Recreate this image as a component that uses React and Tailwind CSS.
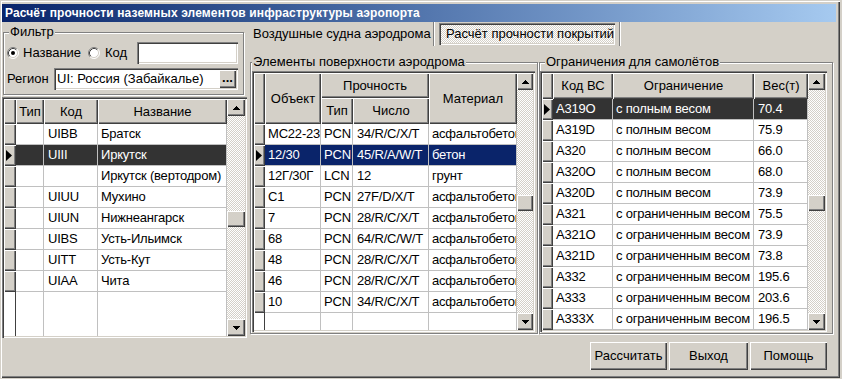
import React from "react";

const raised =
  "bg-[#d4d0c8] shadow-[inset_1px_1px_0_#fff,inset_-1px_-1px_0_#404040,inset_-2px_-2px_0_#808080]";
const button =
  "bg-[#d4d0c8] shadow-[inset_1px_1px_0_#fff,inset_-1px_-1px_0_#404040,inset_-2px_-2px_0_#808080,inset_2px_2px_0_#d4d0c8]";
const sunken =
  "shadow-[inset_1px_1px_0_#808080,inset_2px_2px_0_#404040,inset_-1px_-1px_0_#fff,inset_-2px_-2px_0_#d4d0c8]";
const checker =
  "bg-[repeating-conic-gradient(#fff_0_25%,#d4d0c8_0_50%)] bg-[length:2px_2px]";

const leftRows = [
  { code: "UIBB", name: "Братск" },
  { code: "UIII", name: "Иркутск", sel: true },
  { code: "", name: "Иркутск (вертодром)" },
  { code: "UIUU", name: "Мухино" },
  { code: "UIUN", name: "Нижнеангарск" },
  { code: "UIBS", name: "Усть-Ильимск" },
  { code: "UITT", name: "Усть-Кут" },
  { code: "UIAA", name: "Чита" },
];

const surfaces = [
  ["МС22-23", "PCN", "34/R/C/X/T", "асфальтобетон"],
  ["12/30", "PCN", "45/R/A/W/T", "бетон", true],
  ["12Г/30Г", "LCN", "12", "грунт"],
  ["С1", "PCN", "27F/D/X/T", "асфальтобетон"],
  ["7", "PCN", "28/R/C/X/T", "асфальтобетон"],
  ["68", "PCN", "64/R/C/W/T", "асфальтобетон"],
  ["48", "PCN", "28/R/C/X/T", "асфальтобетон"],
  ["46", "PCN", "28/R/C/X/T", "асфальтобетон"],
  ["10", "PCN", "34/R/C/X/T", "асфальтобетон"],
];

const planes = [
  ["A319O", "с полным весом", "70.4", true],
  ["A319D", "с полным весом", "75.9"],
  ["A320", "с полным весом", "66.0"],
  ["A320O", "с полным весом", "68.0"],
  ["A320D", "с полным весом", "73.9"],
  ["A321", "с ограниченным весом", "75.5"],
  ["A321O", "с ограниченным весом", "73.9"],
  ["A321D", "с ограниченным весом", "73.8"],
  ["A332", "с ограниченным весом", "195.6"],
  ["A333", "с ограниченным весом", "203.6"],
  ["A333X", "с ограниченным весом", "196.5"],
];

function Arrow({ down }) {
  return (
    <svg width="7" height="4" viewBox="0 0 7 4" shapeRendering="crispEdges">
      <path
        d={down ? "M0 0h7v1H6v1H5v1H4v1H3V3H2V2H1V1H0z" : "M3 0h1v1h1v1h1v1h1v1H0V3h1V2h1V1h1z"}
        fill="#000"
      />
    </svg>
  );
}

function Pointer() {
  return (
    <svg width="6" height="11" viewBox="0 0 6 11">
      <polygon points="0,0 6,5.5 0,11" fill="#000" />
    </svg>
  );
}

function Radio({ checked }) {
  return (
    <svg width="12" height="12" viewBox="0 0 12 12" className="shrink-0">
      <circle cx="6" cy="6" r="5" fill="#fff" />
      <path d="M2.11 9.89A5.5 5.5 0 0 1 9.89 2.11" stroke="#808080" fill="none" />
      <path d="M9.89 2.11A5.5 5.5 0 0 1 2.11 9.89" stroke="#fff" fill="none" />
      <path d="M2.82 9.18A4.5 4.5 0 0 1 9.18 2.82" stroke="#404040" fill="none" />
      <path d="M9.18 2.82A4.5 4.5 0 0 1 2.82 9.18" stroke="#d4d0c8" fill="none" />
      {checked && <circle cx="6" cy="6" r="2" fill="#000" />}
    </svg>
  );
}

function Head({ className, children }) {
  return (
    <div className={`${className} shrink-0 flex items-center justify-center whitespace-nowrap ${raised}`}>
      {children}
    </div>
  );
}

function Ind({ className, sel }) {
  return (
    <div className={`${className} shrink-0 h-full flex items-center pl-[2px] ${raised}`}>
      {sel && <Pointer />}
    </div>
  );
}

function Cell({ className, sel, pl = "pl-[3px]", children }) {
  return (
    <div
      className={`${className} ${pl} shrink-0 h-full overflow-hidden whitespace-nowrap leading-[20px] tracking-[-0.2px] border-r border-b border-[#c0c0c0] ${sel || "bg-white"}`}
    >
      {children}
    </div>
  );
}

function Filler({ ind, cols }) {
  return (
    <div className="flex-1 flex bg-white">
      <div className={`${ind} shrink-0 border-r border-[#404040]`} />
      {cols.map((c, i) => (
        <div key={i} className={`${c} shrink-0 border-r border-[#c0c0c0]`} />
      ))}
    </div>
  );
}

function Scroll({ w, gap }) {
  return (
    <div className={`${w} h-full shrink-0 flex flex-col`}>
      <div className={`h-[17px] shrink-0 flex items-center justify-center ${raised}`}>
        <Arrow />
      </div>
      <div className={`flex-1 flex flex-col ${checker}`}>
        <div className={`${gap} shrink-0`} />
        <div className={`h-[16px] shrink-0 ${raised}`} />
      </div>
      <div className={`h-[17px] shrink-0 flex items-center justify-center ${raised}`}>
        <Arrow down />
      </div>
    </div>
  );
}

function Group({ label, labelPos, className, children }) {
  return (
    <div
      className={`relative shrink-0 border border-[#808080] shadow-[inset_1px_1px_0_#fff,1px_1px_0_#fff] ${className}`}
    >
      <span className={`absolute ${labelPos} top-[-9px] bg-[#d4d0c8] px-[1px] leading-[16px] whitespace-nowrap`}>
        {label}
      </span>
      {children}
    </div>
  );
}

function LeftGrid() {
  const dark = "bg-[#333333] text-white";
  return (
    <div className={`mt-[2px] w-[245px] h-[241px] p-[2px] flex bg-white ${sunken}`}>
      <div className="w-[223px] h-full flex flex-col">
        <div className="h-[25px] flex shrink-0">
          <Head className="w-[12px]" />
          <Head className="w-[28px]">Тип</Head>
          <Head className="w-[54px]">Код</Head>
          <Head className="w-[129px]">Название</Head>
        </div>
        {leftRows.map((r) => (
          <div key={r.name} className="h-[21px] flex shrink-0">
            <Ind className="w-[12px]" sel={r.sel} />
            <Cell className="w-[28px]" sel={r.sel && dark} />
            <Cell className="w-[54px]" pl="pl-[4px]" sel={r.sel && dark}>
              {r.code}
            </Cell>
            <Cell className="w-[129px]" sel={r.sel && dark}>
              {r.name}
            </Cell>
          </div>
        ))}
        <Filler ind="w-[12px]" cols={["w-[28px]", "w-[54px]", "w-[129px]"]} />
      </div>
      <Scroll w="w-[18px]" gap="h-[95px]" />
    </div>
  );
}

function SurfaceGrid() {
  const navy = "bg-[#0a246a] text-white";
  return (
    <div className={`w-[283px] h-[261px] p-[2px] flex bg-white ${sunken}`}>
      <div className="w-[263px] h-full flex flex-col">
        <div className="h-[51px] flex shrink-0">
          <Head className="w-[11px]" />
          <Head className="w-[56px]">Объект</Head>
          <div className="w-[108px] shrink-0 flex flex-col">
            <Head className="h-[25px]">Прочность</Head>
            <div className="h-[26px] flex">
              <Head className="w-[32px]">Тип</Head>
              <Head className="w-[76px]">Число</Head>
            </div>
          </div>
          <Head className="w-[88px]">Материал</Head>
        </div>
        {surfaces.map((r) => (
          <div key={r[0]} className="h-[21px] flex shrink-0">
            <Ind className="w-[11px]" sel={r[4]} />
            <Cell className="w-[56px]" sel={r[4] && navy}>
              {r[0]}
            </Cell>
            <Cell className="w-[32px]" sel={r[4] && navy}>
              {r[1]}
            </Cell>
            <Cell className="w-[76px]" pl="pl-[4px]" sel={r[4] && navy}>
              {r[2]}
            </Cell>
            <Cell className="w-[88px]" sel={r[4] && navy}>
              {r[3]}
            </Cell>
          </div>
        ))}
        <Filler ind="w-[11px]" cols={["w-[56px]", "w-[32px]", "w-[76px]", "w-[88px]"]} />
      </div>
      <Scroll w="w-[16px]" gap="h-[105px]" />
    </div>
  );
}

function PlaneGrid() {
  const dark = "bg-[#333333] text-white";
  return (
    <div className={`w-[287px] h-[261px] p-[2px] flex bg-white ${sunken}`}>
      <div className="w-[266px] h-full flex flex-col">
        <div className="h-[26px] flex shrink-0">
          <Head className="w-[11px]" />
          <Head className="w-[60px]">Код ВС</Head>
          <Head className="w-[141px]">Ограничение</Head>
          <Head className="w-[54px]">Вес(т)</Head>
        </div>
        {planes.map((r) => (
          <div key={r[0]} className="h-[21px] flex shrink-0">
            <Ind className="w-[11px]" sel={r[3]} />
            <Cell className="w-[60px]" sel={r[3] && dark}>
              {r[0]}
            </Cell>
            <Cell className="w-[141px]" sel={r[3] && dark}>
              {r[1]}
            </Cell>
            <Cell className="w-[54px]" pl="pl-[4px]" sel={r[3] && dark}>
              {r[2]}
            </Cell>
          </div>
        ))}
      </div>
      <Scroll w="w-[17px]" gap="h-[105px]" />
    </div>
  );
}

function LeftColumn() {
  return (
    <div className="w-[245px] shrink-0 flex flex-col pt-[10px]">
      <Group label="Фильтр" labelPos="left-[5px]" className="ml-[1px] w-[241px] h-[63px] pt-[9px] pl-[3px]">
        <div className="h-[22px] flex items-center">
          <div className="w-[81px] flex items-center gap-[4px]">
            <Radio checked />
            <span>Название</span>
          </div>
          <div className="w-[49px] flex items-center gap-[5px]">
            <Radio />
            <span>Код</span>
          </div>
          <div className={`w-[101px] h-[22px] bg-white ${sunken}`} />
        </div>
        <div className="mt-[4px] h-[22px] flex items-center">
          <span className="w-[47px]">Регион</span>
          <div className={`w-[184px] h-[22px] p-[2px] flex bg-white ${sunken}`}>
            <span className="flex-1 pl-[1px] leading-[18px] whitespace-nowrap overflow-hidden">
              UI: Россия (Забайкалье)
            </span>
            <div className={`w-[17px] h-full flex items-center justify-center font-bold leading-none pb-[4px] ${button}`}>
              ...
            </div>
          </div>
        </div>
      </Group>
      <LeftGrid />
    </div>
  );
}

function RightColumn() {
  return (
    <div className="flex-1 flex flex-col">
      <div className="h-[24px] shrink-0 flex items-start">
        <div className="w-[186px] h-full flex items-center pl-[6px] whitespace-nowrap">
          Воздушные судна аэродрома
        </div>
        <div className="w-[2px] h-full border-l border-[#808080] border-r border-r-white" />
        <div
          className={`ml-[4px] mt-[1px] w-[176px] h-[22px] flex items-center pl-[7px] whitespace-nowrap ${checker} ${sunken}`}
        >
          Расчёт прочности покрытий
        </div>
        <div className="ml-[4px] w-[2px] h-full border-l border-[#808080] border-r border-r-white" />
      </div>
      <div className="mt-[16px] ml-[3px] flex">
        <Group
          label="Элементы поверхности аэродрома"
          labelPos="left-[1px]"
          className="w-[288px] h-[272px] pt-[8px] pl-[1px]"
        >
          <SurfaceGrid />
        </Group>
        <Group
          label="Ограничения для самолётов"
          labelPos="left-[5px]"
          className="ml-[1px] w-[294px] h-[272px] pt-[8px]"
        >
          <PlaneGrid />
        </Group>
      </div>
      <div className="mt-[8px] ml-[343px] h-[28px] flex gap-[2px]">
        <div className={`w-[77px] h-full flex items-center justify-center ${button}`}>Рассчитать</div>
        <div className={`w-[79px] h-full flex items-center justify-center ${button}`}>Выход</div>
        <div className={`w-[77px] h-full flex items-center justify-center ${button}`}>Помощь</div>
      </div>
    </div>
  );
}

export default function App() {
  return (
    <div className="w-[842px] h-[379px] bg-[#d4d0c8] overflow-hidden font-['Liberation_Sans',Arial,sans-serif] text-[13px] text-black">
      <div className="w-[840px] h-[378px] pt-[4px] pl-[2px] pr-[4px] pb-[4px] flex flex-col shadow-[inset_1px_1px_0_#d4d0c8,inset_2px_2px_0_#fff,inset_-1px_-1px_0_#404040,inset_-2px_-2px_0_#808080]">
        <div className="h-[18px] shrink-0 flex items-center pl-[3px] bg-linear-to-r from-[#0a246a] to-[#a6caf0] text-white font-bold text-[12px] tracking-[0.13px] whitespace-nowrap">
          Расчёт прочности наземных элементов инфраструктуры аэропорта
        </div>
        <div className="flex flex-1">
          <LeftColumn />
          <RightColumn />
        </div>
      </div>
    </div>
  );
}
